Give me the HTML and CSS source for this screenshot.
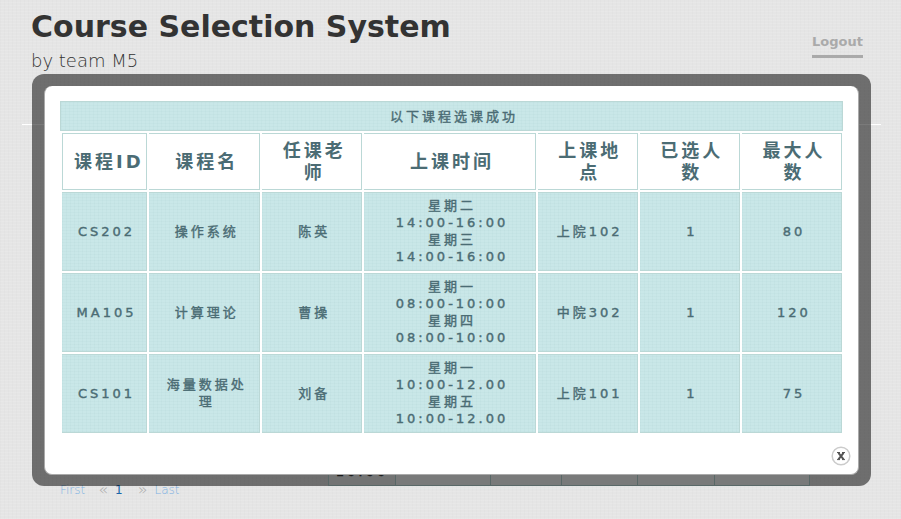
FILE: index.html
```html
<!DOCTYPE html>
<html lang="zh-CN">
<head>
<meta charset="utf-8">
<title>Course Selection System</title>
<link rel="stylesheet" href="styles.css">
</head>
<body>
<header class="masthead">
  <div>
    <h1>Course Selection System</h1>
    <p class="byline">by team M5</p>
  </div>
  <a class="logout" href="#">Logout</a>
</header>
<main class="content">
  <nav class="pager">
    <a class="first" href="#">First</a>
    <span class="arrow">«</span>
    <a class="current" href="#">1</a>
    <span class="arrow">»</span>
    <a href="#">Last</a>
  </nav>
  <table class="timetable">
    <colgroup><col class="t-hour"><col class="t-wide"><col class="t-slim"><col class="t-mid"><col class="t-mid"><col class="t-wide"></colgroup>
    <tr><th>10:00</th><td></td><td></td><td></td><td></td><td></td></tr>
  </table>
</main>
<div class="modal" role="dialog">
  <div class="panel">
    <h2 class="message">以下课程选课成功</h2>
    <table class="courses">
      <colgroup><col class="w-id"><col class="w-name"><col class="w-std"><col class="w-time"><col class="w-std"><col class="w-std"><col class="w-std"></colgroup>
      <thead>
        <tr><th>课程ID</th><th>课程名</th><th>任课老师</th><th>上课时间</th><th>上课地点</th><th>已选人数</th><th>最大人数</th></tr>
      </thead>
      <tbody>
        <tr><td>CS202</td><td>操作系统</td><td>陈英</td><td>星期二<br>14:00-16:00<br>星期三<br>14:00-16:00</td><td>上院102</td><td>1</td><td>80</td></tr>
        <tr><td>MA105</td><td>计算理论</td><td>曹操</td><td>星期一<br>08:00-10:00<br>星期四<br>08:00-10:00</td><td>中院302</td><td>1</td><td>120</td></tr>
        <tr><td>CS101</td><td>海量数据处理</td><td>刘备</td><td>星期一<br>10:00-12.00<br>星期五<br>10:00-12.00</td><td>上院101</td><td>1</td><td>75</td></tr>
      </tbody>
    </table>
    <button class="close" type="button" aria-label="Close">
      <svg viewBox="0 0 20 20" width="20" height="20">
        <circle cx="10" cy="10" r="8.8" fill="#fff" stroke="#cbcbcb" stroke-width="1.5"/>
        <path d="M7.4 6.8 L12.6 13.4 M12.6 6.8 L7.4 13.4" stroke="#555" stroke-width="2"/>
        <path d="M6 6.5 H9 M11 6.5 H14 M6 13.6 H9 M11 13.6 H14" stroke="#555" stroke-width="1"/>
      </svg>
    </button>
  </div>
</div>
</body>
</html>
```
FILE: styles.css
```css
* { box-sizing: border-box; }

body {
  margin: 0;
  min-height: 100vh;
  position: relative;
  font-family: "DejaVu Sans", "Noto Sans CJK SC", sans-serif;
  color: #333;
  background-color: #e5e5e5;
  background-image:
    repeating-linear-gradient(0deg, rgba(255,255,255,.1) 0 1px, transparent 1px 3px),
    repeating-linear-gradient(90deg, rgba(0,0,0,.01) 0 1px, transparent 1px 4px);
}

.masthead {
  display: flex;
  justify-content: space-between;
  align-items: flex-start;
  height: 125px;
  margin: 0 20px 0 22px;
  padding: 8px 18px 0 9px;
  border-bottom: 1px solid #fff;
}

h1 {
  margin: 0;
  font-size: 30px;
  line-height: 38px;
}

.byline {
  margin: 4px 0 0;
  font-size: 18px;
  font-weight: 200;
  line-height: 22px;
}

.logout {
  margin-top: 26px;
  padding-bottom: 5px;
  border-bottom: 3px solid #aaa;
  color: #aaa;
  font-size: 13px;
  font-weight: bold;
  line-height: 16px;
  text-decoration: none;
}

.content {
  display: flex;
  align-items: flex-end;
  padding: 0 91px 32px 60px;
}

.pager {
  flex: 0 0 268px;
  display: flex;
  height: 16px;
  margin-bottom: -12px;
  font-size: 12px;
  font-weight: 200;
  line-height: 16px;
}

.pager a { color: #7fb2e2; text-decoration: none; }
.pager .first { margin-right: 13px; }
.pager .arrow { color: #aaa; font-size: 16px; margin-right: 7px; }
.pager .current { color: #1a66a8; font-weight: normal; margin-right: 15px; }

.timetable {
  flex: 1;
  height: 361px;
  border-collapse: collapse;
  table-layout: fixed;
}

.timetable th,
.timetable td {
  padding: 0 0 5px;
  border: 1px solid #bbdad8;
  background: #fcffff;
  vertical-align: bottom;
  font-size: 13px;
  font-weight: normal;
  letter-spacing: 3px;
  line-height: 16px;
}

.timetable th {
  background: #f0f3f3;
  -webkit-text-stroke: 0.4px currentColor;
}

.t-hour { width: 67px; }
.t-wide { width: 95px; }
.t-slim { width: 71px; }
.t-mid { width: 77px; }

.modal {
  position: absolute;
  top: 74px;
  left: 32px;
  right: 30px;
  padding: 12px 12px 11px;
  border-radius: 12px;
  background: rgba(0,0,0,.52);
}

.panel {
  padding: 15px 16px 8px;
  border-radius: 8px;
  background: #fff;
  border: 1px solid #aaa;
  border-width: 0 1px 1px;
}

.message,
.courses td {
  border: 1px solid #bbd8d6;
  background-color: #c9e7e8;
  background-image:
    repeating-linear-gradient(0deg, rgba(120,170,170,.05) 0 1px, transparent 1px 3px),
    repeating-linear-gradient(90deg, rgba(120,170,170,.05) 0 1px, transparent 1px 4px);
  color: #4b6c74;
  font-size: 13px;
  font-weight: normal;
  letter-spacing: 3px;
  line-height: 17px;
  -webkit-text-stroke: 0.4px currentColor;
}

.message {
  margin: 0 -1px;
  padding: 6px 0 5px 5px;
  text-align: center;
}

.courses {
  width: calc(100% + 3px);
  margin: 0 -2px 0 -1px;
  table-layout: fixed;
  border-collapse: separate;
  border-spacing: 2px;
}

.w-id { width: 85px; }
.w-name { width: 111px; }
.w-std { width: 100px; }
.w-time { width: 171px; }

.courses th,
.courses td {
  padding: 4px 6px 5px 11px;
  text-align: center;
  vertical-align: middle;
}

.courses th {
  padding-top: 6px;
  border: 1px solid #bbd8d6;
  border-left-width: 0;
  color: #4b6c74;
  font-size: 18px;
  letter-spacing: 3px;
  line-height: 22px;
}

.courses th:first-child { border-left-width: 1px; white-space: nowrap; }
.courses td { border-left-width: 0; }

.close {
  display: block;
  width: 20px;
  height: 20px;
  margin: 11px -9px 0 auto;
  padding: 0;
  border: 0;
  background: none;
}

.close svg { display: block; }
```
